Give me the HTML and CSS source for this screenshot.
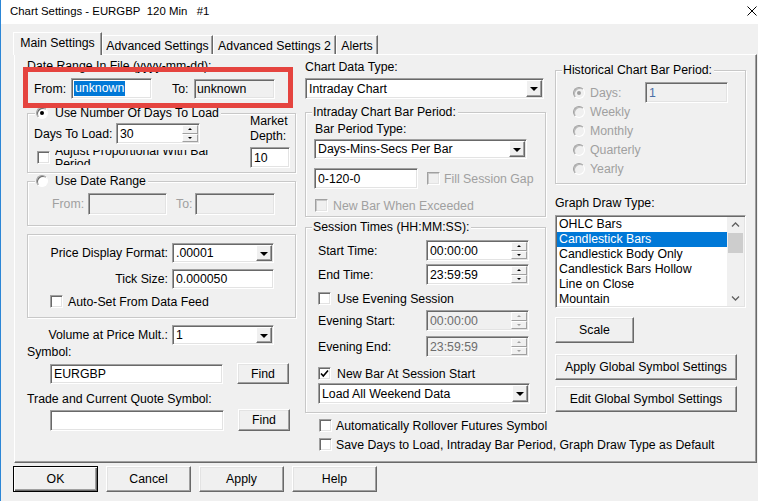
FILE: index.html
```html
<!DOCTYPE html>
<html lang="en">
<head>
  <meta charset="UTF-8">
  <title>Chart Settings</title>
  <link rel="stylesheet" href="styles.css">
</head>
<body>
  <div class="window">
    <div class="titlebar">
      <span class="title">Chart Settings - EURGBP&nbsp; 120 Min &nbsp; #1</span>
      <svg class="close" width="10" height="10" viewBox="0 0 10 10">
        <path d="M0.5 0.5 L9.5 9.5 M9.5 0.5 L0.5 9.5" stroke="#000" stroke-width="1" fill="none"/>
      </svg>
    </div>

    <div class="tabs">
      <div class="tab active t1">Main Settings</div>
      <div class="tab t2">Advanced Settings</div>
      <div class="tab t3">Advanced Settings 2</div>
      <div class="tab t4">Alerts</div>
    </div>

    <div class="panel">
      <!-- left column -->
      <div class="col col-left">
        <div class="line">Date Range In File (yyyy-mm-dd):</div>
        <div class="range-row">
          <span class="from-lbl">From:</span>
          <div class="edit range-from"><span class="sel">unknown</span></div>
          <span class="to-lbl">To:</span>
          <div class="edit ro range-to">unknown</div>
        </div>

        <div class="group g-days">
          <div class="g-days-main">
            <div class="legend"><span class="radio on"></span>Use Number Of Days To Load</div>
            <div class="days-row">
              <span class="days-lbl">Days To Load:</span>
              <div class="edit spin days-spin">
                <span class="val">30</span>
                <span class="spin-btns"><span class="sb up"></span><span class="sb down"></span></span>
              </div>
            </div>
            <div class="adjust-row">
              <span class="cb"></span>
              <div class="clip"><div class="clip-text">Adjust Proportional With Bar Period</div></div>
            </div>
          </div>
          <div class="market">
            <div class="mline">Market</div>
            <div class="mline">Depth:</div>
            <div class="edit market-edit">10</div>
          </div>
        </div>

        <div class="group g-range">
          <div class="legend"><span class="radio"></span>Use Date Range</div>
          <div class="date-row">
            <span class="dis-text dr-from">From:</span>
            <div class="edit ro dr-edit1"></div>
            <span class="dis-text dr-to">To:</span>
            <div class="edit ro dr-edit2"></div>
          </div>
        </div>

        <div class="group g-price">
          <div class="form-row price-row">
            <span class="rlabel">Price Display Format:</span>
            <div class="edit combo w-field"><span class="val">.00001</span><span class="drop"></span></div>
          </div>
          <div class="form-row tick-row">
            <span class="rlabel">Tick Size:</span>
            <div class="edit w-field">0.000050</div>
          </div>
          <div class="cbrow autoset-row">
            <span class="cb"></span><span class="cb-lbl">Auto-Set From Data Feed</span>
          </div>
        </div>

        <div class="form-row volume-row">
          <span class="rlabel vlabel">Volume at Price Mult.:</span>
          <div class="edit combo w-field"><span class="val">1</span><span class="drop"></span></div>
        </div>
        <div class="line">Symbol:</div>
        <div class="symbol-row">
          <div class="edit sym-edit">EURGBP</div>
          <div class="btn find-btn">Find</div>
        </div>
        <div class="line trade-lbl">Trade and Current Quote Symbol:</div>
        <div class="symbol-row trade-row">
          <div class="edit sym-edit"></div>
          <div class="btn find-btn">Find</div>
        </div>
      </div>

      <!-- middle column -->
      <div class="col col-mid">
        <div class="line cdt-lbl">Chart Data Type:</div>
        <div class="edit combo cdt-combo"><span class="val">Intraday Chart</span><span class="drop"></span></div>

        <div class="group g-intraday">
          <div class="legend plain">Intraday Chart Bar Period:</div>
          <div class="line bpt-lbl">Bar Period Type:</div>
          <div class="edit combo bpt-combo"><span class="val">Days-Mins-Secs Per Bar</span><span class="drop"></span></div>
          <div class="period-row">
            <div class="edit period-edit">0-120-0</div>
            <span class="cb dis"></span><span class="dis-text fill-lbl">Fill Session Gap</span>
          </div>
          <div class="cbrow newbar-row">
            <span class="cb dis"></span><span class="dis-text cb-lbl">New Bar When Exceeded</span>
          </div>
        </div>

        <div class="group g-session">
          <div class="legend plain">Session Times (HH:MM:SS):</div>
          <div class="time-row start-row">
            <span class="time-lbl">Start Time:</span>
            <div class="edit spin time-spin">
              <span class="val">00:00:00</span>
              <span class="spin-btns"><span class="sb up"></span><span class="sb down"></span></span>
            </div>
          </div>
          <div class="time-row end-row">
            <span class="time-lbl">End Time:</span>
            <div class="edit spin time-spin">
              <span class="val">23:59:59</span>
              <span class="spin-btns"><span class="sb up"></span><span class="sb down"></span></span>
            </div>
          </div>
          <div class="cbrow evening-cb">
            <span class="cb"></span><span class="cb-lbl wide">Use Evening Session</span>
          </div>
          <div class="time-row ev-start">
            <span class="time-lbl">Evening Start:</span>
            <div class="edit ro spin time-spin">
              <span class="val dis-val">00:00:00</span>
              <span class="spin-btns dis"><span class="sb up"></span><span class="sb down"></span></span>
            </div>
          </div>
          <div class="time-row ev-end">
            <span class="time-lbl">Evening End:</span>
            <div class="edit ro spin time-spin">
              <span class="val dis-val">23:59:59</span>
              <span class="spin-btns dis"><span class="sb up"></span><span class="sb down"></span></span>
            </div>
          </div>
          <div class="cbrow newbar-session">
            <span class="cb checked">
              <svg width="9" height="9" viewBox="0 0 9 9"><path d="M1 4.5 L3.3 7 L8 1.5" stroke="#000" stroke-width="1.6" fill="none"/></svg>
            </span>
            <span class="cb-lbl wide">New Bar At Session Start</span>
          </div>
          <div class="edit combo weekend-combo"><span class="val">Load All Weekend Data</span><span class="drop"></span></div>
        </div>

        <div class="cbrow bottom-cb first">
          <span class="cb"></span><span class="cb-lbl">Automatically Rollover Futures Symbol</span>
        </div>
        <div class="cbrow bottom-cb">
          <span class="cb"></span><span class="cb-lbl">Save Days to Load, Intraday Bar Period, Graph Draw Type as Default</span>
        </div>
      </div>

      <!-- right column -->
      <div class="col col-right">
        <div class="group g-hist">
          <div class="legend plain">Historical Chart Bar Period:</div>
          <div class="hist-row first">
            <span class="radio dis on"></span><span class="dis-text hist-lbl days-lbl2">Days:</span>
            <div class="edit ro hist-edit">1</div>
          </div>
          <div class="hist-row"><span class="radio dis"></span><span class="dis-text hist-lbl">Weekly</span></div>
          <div class="hist-row"><span class="radio dis"></span><span class="dis-text hist-lbl">Monthly</span></div>
          <div class="hist-row"><span class="radio dis"></span><span class="dis-text hist-lbl">Quarterly</span></div>
          <div class="hist-row"><span class="radio dis"></span><span class="dis-text hist-lbl">Yearly</span></div>
        </div>

        <div class="line gdt-lbl">Graph Draw Type:</div>
        <div class="listbox">
          <div class="items">
            <div class="item">OHLC Bars</div>
            <div class="item selected">Candlestick Bars</div>
            <div class="item">Candlestick Body Only</div>
            <div class="item">Candlestick Bars Hollow</div>
            <div class="item">Line on Close</div>
            <div class="item">Mountain</div>
          </div>
          <div class="scrollbar">
            <svg class="chev" width="17" height="16" viewBox="0 0 17 16"><path d="M5 9.5 L8.5 6 L12 9.5" stroke="#606060" stroke-width="1.3" fill="none"/></svg>
            <div class="thumb"></div>
            <div class="track"></div>
            <svg class="chev" width="17" height="16" viewBox="0 0 17 16"><path d="M5 6.5 L8.5 10 L12 6.5" stroke="#606060" stroke-width="1.3" fill="none"/></svg>
          </div>
        </div>

        <div class="btn scale-btn">Scale</div>
        <div class="btn global-btn apply-global">Apply Global Symbol Settings</div>
        <div class="btn global-btn edit-global">Edit Global Symbol Settings</div>
      </div>
    </div>

    <div class="footer">
      <div class="btn default">OK</div>
      <div class="btn">Cancel</div>
      <div class="btn">Apply</div>
      <div class="btn">Help</div>
    </div>

    <div class="callout"></div>
  </div>
</body>
</html>
```

FILE: styles.css
```css
* {
  box-sizing: border-box;
}

body {
  margin: 0;
  background-color: #f0f0f0;
  font-family: "Liberation Sans", Arial, sans-serif;
  font-size: 12.3px;
  color: #000;
}

.window {
  position: relative;
  width: 758px;
  height: 501px;
  border-left: 1px solid #2b86d6;
  overflow: hidden;
}

/* title bar */
.titlebar {
  height: 24px;
  background-color: #fff;
  display: flex;
  align-items: center;
  justify-content: space-between;
  padding: 0 1px 2px 9px;
}

.title {
  font-size: 11.4px;
  white-space: pre;
}

/* tabs */
.tabs {
  display: flex;
  align-items: flex-end;
  height: 22px;
  margin-top: 8px;
  padding-left: 12px;
}

.tab {
  height: 19px;
  border: 1px solid;
  border-color: #fff #696969 transparent #fff;
  border-bottom: none;
  box-shadow: inset -1px 0 #a0a0a0;
  display: flex;
  align-items: center;
  justify-content: center;
  padding-top: 1px;
  white-space: nowrap;
}

.tab.active {
  height: 23px;
  margin-bottom: -1px;
  background-color: #f0f0f0;
  position: relative;
  z-index: 1;
  align-items: flex-start;
  padding-top: 3px;
}

.t1 { width: 89px; }
.t2 { width: 111px; }
.t3 { width: 123px; }
.t4 { width: 42px; }

/* main panel */
.panel {
  width: 743px;
  height: 409px;
  margin-left: 13px;
  border: 1px solid;
  border-color: #fff #696969 #696969 #fff;
  box-shadow: inset -1px -1px #a0a0a0;
  display: flex;
  gap: 9px;
  padding: 4px 0 0 12px;
}

.col {
  display: flex;
  flex-direction: column;
  align-items: flex-start;
}

.col-left { width: 269px; }
.col-mid { width: 241px; }
.col-right { width: 191px; }

.line {
  height: 14px;
  line-height: 14px;
  white-space: nowrap;
}

/* common controls */
.edit {
  height: 20px;
  display: flex;
  align-items: center;
  background-color: #fff;
  border: 1px solid;
  border-color: #a0a0a0 #fff #fff #a0a0a0;
  box-shadow: inset 1px 1px #696969, inset -1px -1px #e3e3e3;
  padding-left: 3px;
  white-space: nowrap;
  flex: none;
}

.edit.ro {
  background-color: #f0f0f0;
}

.combo {
  padding: 1px;
  justify-content: space-between;
}

.combo .val {
  padding-left: 2px;
}

.drop {
  width: 16px;
  height: 100%;
  background-color: #f0f0f0;
  border: 1px solid;
  border-color: #fff #696969 #696969 #fff;
  box-shadow: inset -1px -1px #a0a0a0;
  display: flex;
  align-items: center;
  justify-content: center;
}

.drop::after {
  content: "";
  border-top: 4px solid #000;
  border-left: 4px solid transparent;
  border-right: 4px solid transparent;
  margin-top: 1px;
}

.spin {
  padding: 1px;
  justify-content: space-between;
}

.spin .val {
  padding-left: 2px;
}

.spin-btns {
  width: 16px;
  height: 100%;
  display: flex;
  flex-direction: column;
}

.sb {
  flex: 1;
  background-color: #f0f0f0;
  border: 1px solid;
  border-color: #fff #a0a0a0 #a0a0a0 #fff;
  display: flex;
  align-items: center;
  justify-content: center;
}

.sb.up::after {
  content: "";
  border-bottom: 2px solid #000;
  border-left: 2px solid transparent;
  border-right: 2px solid transparent;
}

.sb.down::after {
  content: "";
  border-top: 2px solid #000;
  border-left: 2px solid transparent;
  border-right: 2px solid transparent;
}

.spin-btns.dis .sb::after {
  border-top-color: #a0a0a0;
  border-bottom-color: #a0a0a0;
}

.dis-val {
  color: #6d6d6d;
}

.btn {
  display: flex;
  align-items: center;
  justify-content: center;
  background-color: #f0f0f0;
  border: 1px solid;
  border-color: #fff #696969 #696969 #fff;
  box-shadow: inset -1px -1px #a0a0a0, inset 1px 1px #e3e3e3;
  white-space: nowrap;
  flex: none;
}

.btn.default {
  border-color: #000;
  box-shadow: inset 1px 1px #fff, inset -1px -1px #696969, inset -2px -2px #a0a0a0;
}

.cb {
  width: 13px;
  height: 13px;
  background-color: #fff;
  border: 1px solid;
  border-color: #a0a0a0 #fff #fff #a0a0a0;
  box-shadow: inset 1px 1px #696969, inset -1px -1px #e3e3e3;
  flex: none;
  display: flex;
  align-items: center;
  justify-content: center;
}

.cb.dis {
  background-color: #f0f0f0;
  box-shadow: inset 1px 1px #c8c8c8, inset -1px -1px #e3e3e3;
}

.radio {
  width: 12px;
  height: 12px;
  border-radius: 50%;
  background-color: #fff;
  border: 1px solid;
  border-color: #a0a0a0 #fff #fff #a0a0a0;
  box-shadow: inset 1px 1px #696969;
  flex: none;
  display: flex;
  align-items: center;
  justify-content: center;
}

.radio.on::after {
  content: "";
  width: 4px;
  height: 4px;
  border-radius: 50%;
  background-color: #000;
}

.radio.dis {
  background-color: #f0f0f0;
  box-shadow: inset 1px 1px #b8b8b8;
}

.radio.dis.on::after {
  background-color: #a0a0a0;
}

.dis-text {
  color: #a0a0a0;
  white-space: nowrap;
}

.cbrow {
  display: flex;
  align-items: center;
  height: 13px;
}

.cb-lbl {
  margin-left: 5px;
  white-space: nowrap;
}

.cb-lbl.wide {
  margin-left: 6px;
}

/* group boxes */
.group {
  border: 1px solid #c8c8c8;
  box-shadow: inset 1px 1px #fff, 1px 1px #fff;
  flex: none;
}

.legend {
  display: flex;
  align-items: center;
  gap: 7px;
  height: 14px;
  margin: -8px 0 0 7px;
  padding: 0 2px 0 1px;
  background-color: #f0f0f0;
  align-self: flex-start;
  width: max-content;
  white-space: nowrap;
}

.legend.plain {
  margin-left: 6px;
}

/* left column */
.range-row {
  display: flex;
  align-items: center;
  height: 21px;
  margin-top: 5px;
  padding-left: 7px;
}

.from-lbl { width: 37px; }
.range-from { width: 81px; height: 21px; padding-left: 2px; }
.to-lbl { width: 22px; margin-left: 20px; }
.range-to { width: 81px; padding-left: 2px; }

.sel {
  background-color: #0078d7;
  color: #fff;
  line-height: 15px;
  padding: 0 1px;
}

.g-days {
  width: 269px;
  height: 60px;
  margin-top: 14px;
  display: flex;
}

.g-days-main {
  width: 222px;
  display: flex;
  flex-direction: column;
}

.days-row {
  display: flex;
  align-items: center;
  margin-top: 3px;
  height: 21px;
  padding-left: 6px;
}

.days-lbl { width: 82px; }
.days-spin { width: 84px; height: 21px; }

/* the label of this checkbox is taller than its box, so both lines are cut */
.adjust-row {
  display: flex;
  align-items: center;
  margin-top: 6px;
  height: 15px;
  padding-left: 9px;
}

.clip {
  height: 15px;
  width: 178px;
  margin-left: 5px;
  overflow: hidden;
}

.clip-text {
  margin-top: -5px;
  line-height: 13px;
}

.market {
  width: 40px;
  display: flex;
  flex-direction: column;
}

.mline {
  height: 15px;
  line-height: 15px;
}

.market-edit {
  width: 40px;
  height: 21px;
  margin-top: 3px;
}

.g-range {
  width: 269px;
  height: 45px;
  margin-top: 8px;
  display: flex;
  flex-direction: column;
}

.date-row {
  display: flex;
  align-items: center;
  height: 22px;
  margin-top: 5px;
  padding-left: 24px;
}

.dr-from { width: 36px; }
.dr-edit1 { width: 79px; height: 22px; }
.dr-to { width: 19px; margin-left: 9px; }
.dr-edit2 { width: 80px; height: 22px; }

.g-price {
  width: 269px;
  height: 84px;
  margin-top: 8px;
  display: flex;
  flex-direction: column;
}

.form-row {
  display: flex;
  align-items: center;
  height: 20px;
}

.rlabel {
  width: 140px;
  margin-right: 4px;
  text-align: right;
  white-space: nowrap;
}

.vlabel { width: 141px; }

.w-field { width: 102px; }

.price-row { margin-top: 8px; }
.tick-row { margin-top: 6px; }

.autoset-row {
  margin-top: 6px;
  padding-left: 22px;
}

.volume-row { margin-top: 7px; }

.symbol-row {
  display: flex;
  align-items: center;
  height: 21px;
  margin-top: 4px;
  padding-left: 23px;
  gap: 14px;
}

.sym-edit { width: 173px; }
.find-btn { width: 52px; height: 21px; }

.trade-lbl { margin-top: 8px; }

.trade-row {
  margin-top: 3px;
  height: 22px;
}

.trade-row .sym-edit { width: 174px; height: 21px; }
.trade-row .find-btn { height: 22px; }

/* middle column */
.cdt-lbl { margin-top: 1px; }

.cdt-combo {
  width: 239px;
  height: 21px;
  margin-top: 4px;
}

.g-intraday {
  width: 241px;
  height: 105px;
  margin-top: 13px;
  display: flex;
  flex-direction: column;
  padding-left: 8px;
}

.g-intraday .legend {
  margin-left: -2px;
}

.bpt-lbl {
  margin-top: 3px;
  padding-left: 1px;
}

.bpt-combo {
  width: 213px;
  margin-top: 3px;
}

.period-row {
  display: flex;
  align-items: center;
  height: 21px;
  margin-top: 9px;
}

.period-edit { width: 104px; height: 21px; }
.period-row .cb { margin-left: 9px; }
.fill-lbl { margin-left: 4px; }

.newbar-row {
  margin-top: 10px;
  padding-left: 1px;
}

.g-session {
  width: 241px;
  height: 186px;
  margin-top: 10px;
  display: flex;
  flex-direction: column;
  padding-left: 12px;
}

.g-session .legend {
  margin-left: -6px;
}

.time-row {
  display: flex;
  align-items: center;
  height: 21px;
}

.time-lbl {
  width: 108px;
  white-space: nowrap;
}

.time-spin {
  width: 103px;
  height: 21px;
}

.start-row { margin-top: 6px; }
.end-row { margin-top: 3px; }
.evening-cb { margin-top: 7px; }
.ev-start { margin-top: 5px; }
.ev-end { margin-top: 5px; }
.newbar-session { margin-top: 10px; }

.weekend-combo {
  width: 212px;
  height: 21px;
  margin-top: 3px;
}

.bottom-cb {
  margin-top: 6px;
  padding-left: 14px;
}

.bottom-cb .cb-lbl { margin-left: 4px; }

/* right column */
.g-hist {
  width: 191px;
  height: 114px;
  margin-top: 11px;
  display: flex;
  flex-direction: column;
}

.hist-row {
  display: flex;
  align-items: center;
  height: 19px;
  padding-left: 17px;
}

.hist-row.first { margin-top: 6px; }

.hist-lbl { margin-left: 5px; }
.days-lbl2 { width: 55px; }

.hist-edit {
  width: 83px;
  height: 21px;
  margin: -1px 0;
  color: #4a6fa5;
}

.gdt-lbl { margin-top: 12px; }

.listbox {
  width: 191px;
  height: 93px;
  margin-top: 5px;
  display: flex;
  background-color: #fff;
  border: 1px solid;
  border-color: #a0a0a0 #fff #fff #a0a0a0;
  box-shadow: inset 1px 1px #696969, inset -1px -1px #e3e3e3;
  padding: 1px;
}

.items {
  flex: 1;
}

.item {
  height: 15px;
  line-height: 15px;
  padding-left: 2px;
  white-space: nowrap;
}

.item.selected {
  background-color: #0078d7;
  color: #fff;
}

.scrollbar {
  width: 17px;
  background-color: #f0f0f0;
  display: flex;
  flex-direction: column;
}

.chev {
  flex: none;
  display: block;
}

.thumb {
  height: 20px;
  margin: 0 1px;
  background-color: #cdcdcd;
}

.track {
  flex: 1;
}

.scale-btn {
  width: 79px;
  height: 26px;
  margin-top: 9px;
}

.global-btn {
  width: 182px;
  height: 26px;
}

.apply-global { margin-top: 11px; }
.edit-global { margin-top: 6px; }

/* dialog buttons */
.footer {
  display: flex;
  gap: 8px;
  padding: 3px 0 0 12px;
}

.footer .btn {
  width: 85px;
  height: 26px;
}

/* red annotation frame drawn over the screenshot */
.callout {
  position: absolute;
  left: 22px;
  top: 67px;
  width: 270px;
  height: 41px;
  border: 5px solid #e5443f;
}
```
